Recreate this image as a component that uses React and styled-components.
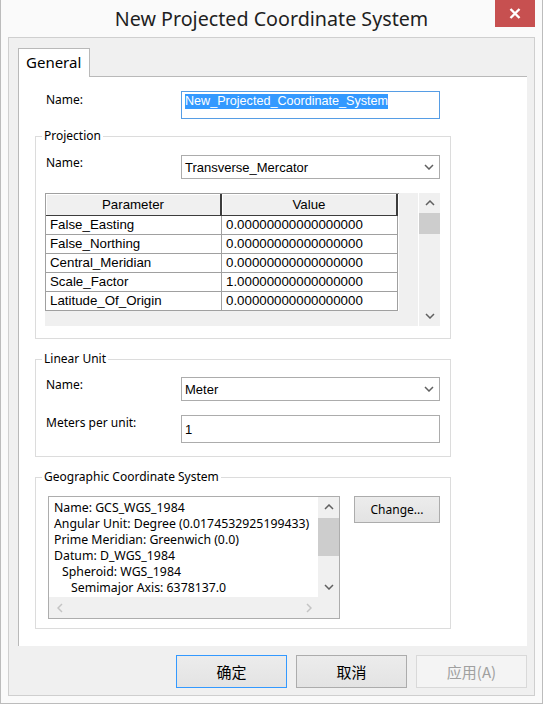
import React from 'react'
import styled, { createGlobalStyle } from 'styled-components'

const UI_FONT = '"Noto Sans", "Open Sans", sans-serif'
const WIN_FONT = '"Liberation Sans", Arial, sans-serif'
const CJK_FONT = '"Noto Sans CJK SC", "Noto Sans", sans-serif'

const GlobalStyle = createGlobalStyle`
  html, body {
    margin: 0;
    padding: 0;
    background: #ffffff;
  }
  body {
    font-family: ${UI_FONT};
    color: #000;
  }
`

const Window = styled.div`
  width: 543px;
  height: 704px;
  box-sizing: border-box;
  background: #fafafa;
  border: 1px solid #bcbcbc;
  border-top: 0;
  padding: 0 7px 7px;
  display: flex;
  flex-direction: column;
`

const TitleBar = styled.div`
  height: 37px;
  flex: none;
  display: grid;
  grid-template-columns: 1fr auto 1fr;
`

const Title = styled.div`
  grid-column: 2;
  line-height: 38px;
  font-family: ${UI_FONT};
  font-size: 19.7px;
  color: #1f1f1f;
  white-space: nowrap;
`

const CloseButton = styled.div`
  grid-column: 3;
  justify-self: end;
  width: 40px;
  height: 27px;
  background: #c75050;
  display: flex;
  align-items: center;
  justify-content: center;
`

const Client = styled.div`
  flex: 1;
  border: 1px solid #cfcfcf;
  background: #f0f0f0;
  padding: 10px 7px 7px 9px;
  display: flex;
  flex-direction: column;
`

const TabStrip = styled.div`
  display: flex;
  height: 28px;
`

const Tab = styled.div`
  position: relative;
  z-index: 1;
  width: 72px;
  height: 29px;
  box-sizing: border-box;
  border: 1px solid #b9b9b9;
  border-bottom: 0;
  background: #fff;
  font-size: 15px;
  line-height: 26px;
  padding-left: 7px;
  color: #000;
`

const TabPage = styled.div`
  height: 570px;
  box-sizing: border-box;
  background: #fff;
  border-top: 1px solid #b9b9b9;
  border-left: 1px solid #b9b9b9;
  padding: 14px 0 0 16px;
  display: flex;
  flex-direction: column;
`

const FieldRow = styled.div`
  display: flex;
  align-items: flex-start;
  margin-left: ${p => p.indent || 0}px;
  margin-top: ${p => p.top || 0}px;
`

const Label = styled.div`
  width: 135px;
  flex: none;
  font-size: 12px;
  line-height: 16px;
  padding-top: ${p => p.offset || 0}px;
`

const TextBox = styled.div`
  width: 259px;
  height: 28px;
  box-sizing: border-box;
  border: 1px solid ${p => (p.focused ? '#569de5' : '#acacac')};
  background: #fff;
  padding: 0 3px;
  display: flex;
  align-items: ${p => (p.focused ? 'flex-start' : 'center')};
  font-family: ${WIN_FONT};
  font-size: ${p => (p.focused ? 12.6 : 13)}px;
`

const Selected = styled.span`
  display: inline-block;
  margin-top: 2px;
  line-height: 15px;
  background: #3399ff;
  color: #fff;
`

const Combo = styled.div`
  width: 259px;
  height: 24px;
  box-sizing: border-box;
  border: 1px solid #acacac;
  background: #fff;
  padding-left: 3px;
  display: flex;
  align-items: center;
  font-family: ${WIN_FONT};
  font-size: 13px;
`

const ComboText = styled.div`
  flex: 1;
`

const ComboArrow = styled.div`
  width: 20px;
  display: flex;
  justify-content: center;
`

const Group = styled.fieldset`
  margin: ${p => p.top}px 0 0;
  width: 416px;
  box-sizing: border-box;
  min-inline-size: 0;
  border: 1px solid #dcdcdc;
  padding: ${p => p.pad};
`

const Legend = styled.legend`
  font-size: 12px;
  line-height: 16px;
  padding: 0 2px;
  margin-left: -4px;
`

const Grid = styled.div`
  display: flex;
  margin: 14px 0 0 -1px;
  width: 395px;
  height: 133px;
`

const GridArea = styled.div`
  width: 373px;
  background: #f0f0f0;
`

const Table = styled.div`
  display: grid;
  grid-template-columns: 176px 176px;
  width: 353px;
  border-top: 1px solid #a0a0a0;
  border-left: 1px solid #a0a0a0;
  background: #fff;
  font-family: ${WIN_FONT};
  font-size: 13.3px;
`

const HeadCell = styled.div`
  height: 22px;
  box-sizing: border-box;
  background: #f0f0f0;
  border-right: 2px solid #3c3c3c;
  border-bottom: 1px solid #3c3c3c;
  box-shadow: inset 1px 1px 0 #fff;
  text-align: center;
  line-height: 21px;
`

const Cell = styled.div`
  height: 19px;
  box-sizing: border-box;
  border-right: 1px solid #a0a0a0;
  border-bottom: 1px solid #a0a0a0;
  padding-left: 4px;
  line-height: 18px;
  white-space: nowrap;
  overflow: hidden;
`

const VScroll = styled.div`
  width: ${p => p.w}px;
  flex: none;
  background: #f0f0f0;
  border-left: ${p => (p.split ? '1px solid #fff' : '0')};
  box-sizing: border-box;
  display: flex;
  flex-direction: column;
`

const ScrollArrow = styled.div`
  height: 20px;
  flex: none;
  display: flex;
  align-items: center;
  justify-content: center;
`

const Thumb = styled.div`
  height: ${p => p.h}px;
  margin-top: ${p => p.top || 0}px;
  background: #cdcdcd;
  flex: none;
`

const Spacer = styled.div`
  flex: 1;
`

const GcsRow = styled.div`
  display: flex;
  align-items: flex-start;
  margin-left: 2px;
`

const ListBox = styled.div`
  width: 292px;
  height: 123px;
  box-sizing: border-box;
  border: 1px solid #adadad;
  display: flex;
  flex-direction: column;
`

const ListTop = styled.div`
  display: flex;
  height: 100px;
`

const ListText = styled.div`
  flex: 1;
  background: #fff;
  padding: 3px 0 0 5px;
  overflow: hidden;
  font-size: 12.3px;
  line-height: 16px;
  white-space: nowrap;
`

const ListLine = styled.div`
  padding-left: ${p => p.indent || 0}px;
`

const HScroll = styled.div`
  height: 21px;
  background: #f0f0f0;
  display: flex;
  align-items: center;
  justify-content: space-between;
  padding: 0 27px 0 8px;
`

const Button = styled.div`
  width: ${p => p.w}px;
  height: ${p => p.h}px;
  box-sizing: border-box;
  border: 1px solid ${p => (p.primary ? '#3399ff' : p.disabled ? '#d9d9d9' : '#acacac')};
  background: ${p => (p.disabled ? '#f4f4f4' : 'linear-gradient(#ececec, #e3e3e3)')};
  color: ${p => (p.disabled ? '#a0a0a0' : '#000')};
  display: flex;
  align-items: center;
  justify-content: center;
  font-family: ${p => (p.cjk ? CJK_FONT : UI_FONT)};
  font-size: ${p => (p.cjk ? 15 : 12)}px;
  margin-left: ${p => p.left || 0}px;
`

const ButtonRow = styled.div`
  display: flex;
  justify-content: flex-end;
  gap: 9px;
  margin-top: 9px;
`

const Chevron = ({ up, color = '#606060' }) => (
  <svg width="10" height="6" viewBox="0 0 10 6">
    <polyline
      points={up ? '1,5 5,1 9,5' : '1,1 5,5 9,1'}
      fill="none"
      stroke={color}
      strokeWidth="1.5"
    />
  </svg>
)

const SideChevron = ({ right }) => (
  <svg width="6" height="10" viewBox="0 0 6 10">
    <polyline
      points={right ? '1,1 5,5 1,9' : '5,1 1,5 5,9'}
      fill="none"
      stroke="#c4c4c4"
      strokeWidth="1.5"
    />
  </svg>
)

const params = [
  ['False_Easting', '0.00000000000000000'],
  ['False_Northing', '0.00000000000000000'],
  ['Central_Meridian', '0.00000000000000000'],
  ['Scale_Factor', '1.00000000000000000'],
  ['Latitude_Of_Origin', '0.00000000000000000'],
]

const gcsLines = [
  ['Name: GCS_WGS_1984', 0],
  ['Angular Unit: Degree (0.0174532925199433)', 0],
  ['Prime Meridian: Greenwich (0.0)', 0],
  ['Datum: D_WGS_1984', 0],
  ['Spheroid: WGS_1984', 8],
  ['Semimajor Axis: 6378137.0', 17],
]

export default function App() {
  return (
    <>
      <GlobalStyle />
      <Window>
        <TitleBar>
          <Title>New Projected Coordinate System</Title>
          <CloseButton>
            <svg width="12" height="11" viewBox="0 0 12 11">
              <path d="M1.5 1 L10.5 10 M10.5 1 L1.5 10" stroke="#fff" strokeWidth="2.4" />
            </svg>
          </CloseButton>
        </TitleBar>

        <Client>
          <TabStrip>
            <Tab>General</Tab>
          </TabStrip>

          <TabPage>
            <FieldRow indent={11}>
              <Label offset={1}>Name:</Label>
              <TextBox focused>
                <Selected>New_Projected_Coordinate_System</Selected>
              </TextBox>
            </FieldRow>

            <Group top={9} pad="11px 10px 12px">
              <Legend>Projection</Legend>
              <FieldRow>
                <Label>Name:</Label>
                <Combo>
                  <ComboText>Transverse_Mercator</ComboText>
                  <ComboArrow><Chevron /></ComboArrow>
                </Combo>
              </FieldRow>
              <Grid>
                <GridArea>
                  <Table>
                    <HeadCell>Parameter</HeadCell>
                    <HeadCell>Value</HeadCell>
                    {params.map(([name, value]) => (
                      <React.Fragment key={name}>
                        <Cell>{name}</Cell>
                        <Cell>{value}</Cell>
                      </React.Fragment>
                    ))}
                  </Table>
                </GridArea>
                <VScroll w={22} split>
                  <ScrollArrow><Chevron up /></ScrollArrow>
                  <Thumb h={21} />
                  <Spacer />
                  <ScrollArrow><Chevron /></ScrollArrow>
                </VScroll>
              </Grid>
            </Group>

            <Group top={12} pad="10px 10px 13px">
              <Legend>Linear Unit</Legend>
              <FieldRow>
                <Label>Name:</Label>
                <Combo>
                  <ComboText>Meter</ComboText>
                  <ComboArrow><Chevron /></ComboArrow>
                </Combo>
              </FieldRow>
              <FieldRow top={14}>
                <Label>Meters per unit:</Label>
                <TextBox>1</TextBox>
              </FieldRow>
            </Group>

            <Group top={12} pad="11px 10px 9px">
              <Legend>Geographic Coordinate System</Legend>
              <GcsRow>
                <ListBox>
                  <ListTop>
                    <ListText>
                      {gcsLines.map(([text, indent]) => (
                        <ListLine key={text} indent={indent}>{text}</ListLine>
                      ))}
                    </ListText>
                    <VScroll w={21}>
                      <ScrollArrow><Chevron up /></ScrollArrow>
                      <Thumb h={38} top={1} />
                      <Spacer />
                      <ScrollArrow><Chevron /></ScrollArrow>
                    </VScroll>
                  </ListTop>
                  <HScroll>
                    <SideChevron />
                    <SideChevron right />
                  </HScroll>
                </ListBox>
                <Button w={86} h={27} left={14}>Change...</Button>
              </GcsRow>
            </Group>
          </TabPage>

          <ButtonRow>
            <Button w={111} h={33} cjk primary>确定</Button>
            <Button w={111} h={33} cjk>取消</Button>
            <Button w={111} h={33} cjk disabled>应用(A)</Button>
          </ButtonRow>
        </Client>
      </Window>
    </>
  )
}
